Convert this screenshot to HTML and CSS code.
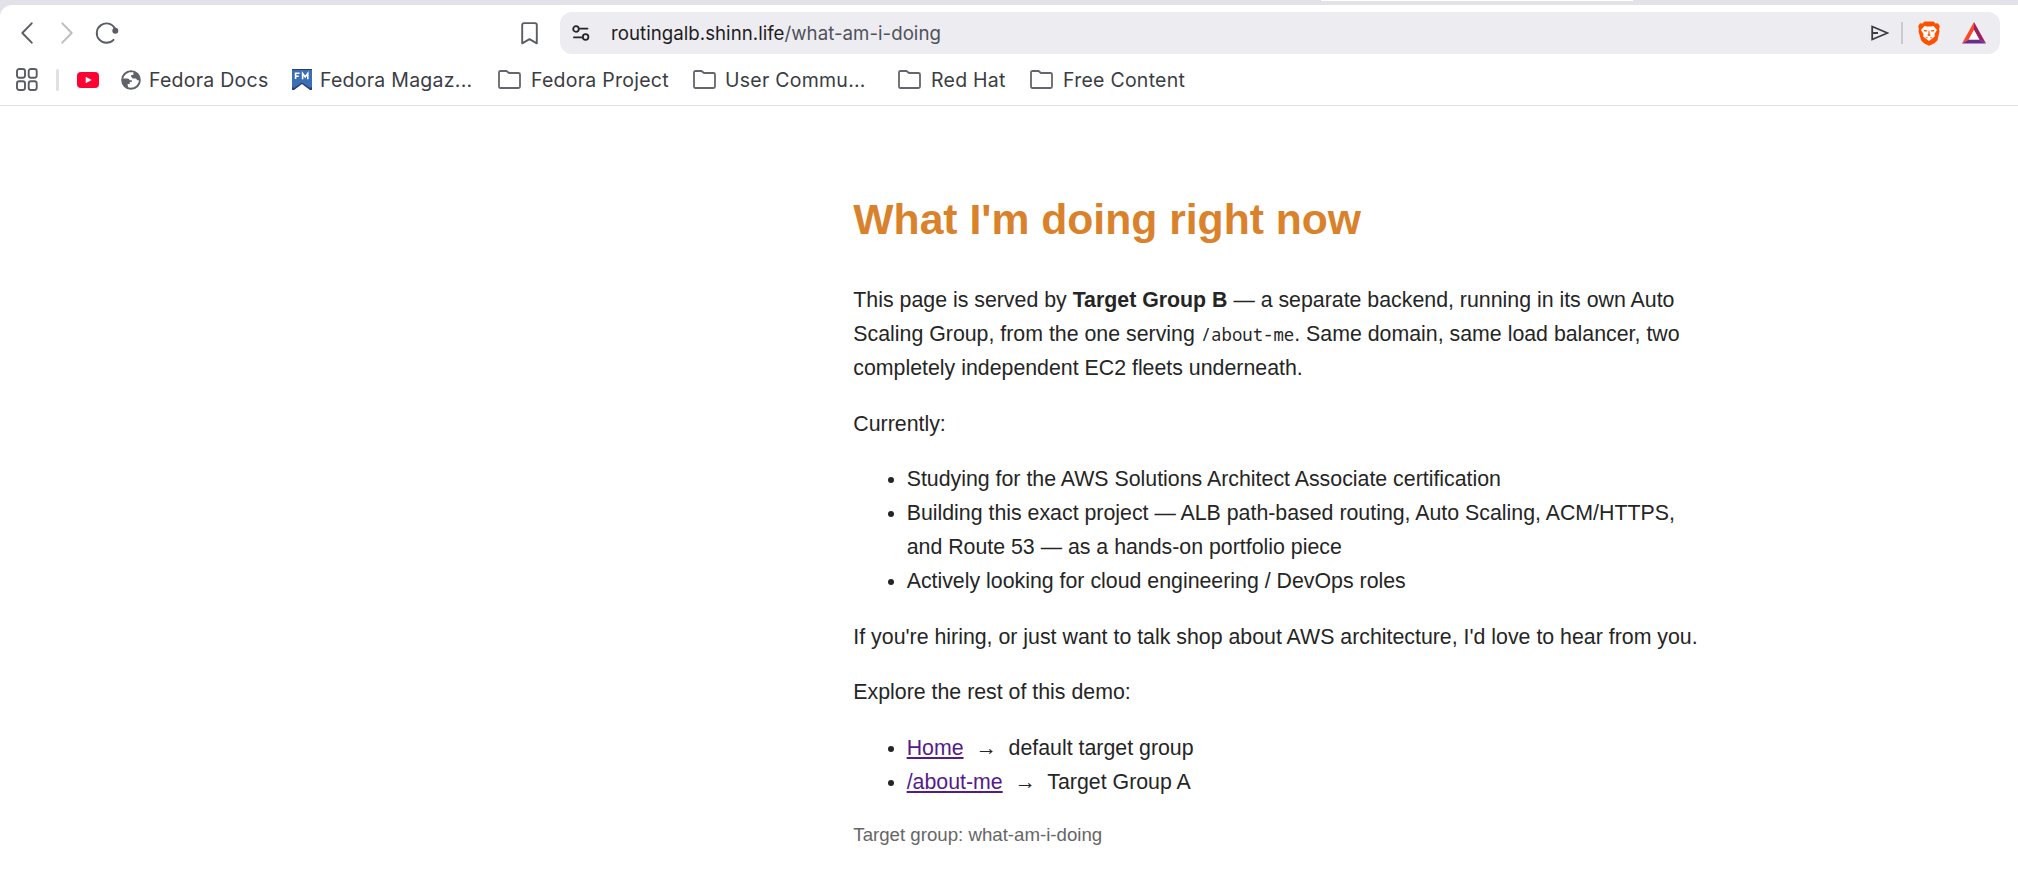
FILE: index.html
```html
<!DOCTYPE html>
<html lang="en">
<head>
<meta charset="utf-8">
<title>What I'm doing right now</title>
<link rel="stylesheet" href="styles.css">
</head>
<body>
<div class="tabstrip"><div class="active-tab"></div></div>
<header class="chrome">
  <div class="toolbar">
    <div class="nav">
      <svg width="12" height="22" viewBox="0 0 12 22"><path class="line" d="M10.700 1.300 1.300 11l9.400 9.700"/></svg>
      <svg class="faded" width="12" height="22" viewBox="0 0 12 22"><path class="line" d="M1.300 1.300 10.700 11l-9.400 9.700"/></svg>
      <svg width="24" height="24" viewBox="0 0 24 24"><path class="line" d="M20 7.500A9.700 9.700 0 1 0 18.500 18.800"/><circle class="dot" cx="20.300" cy="9.700" r="3"/></svg>
    </div>
    <svg class="save" width="17" height="23" viewBox="0 0 17 23"><path class="line" d="M1.200 3q0-1.900 1.900-1.900h10.800q1.900 0 1.900 1.900v18.300L8.500 17.200 1.200 21.300z"/></svg>
    <div class="address">
      <svg class="tune" width="18" height="16" viewBox="0 0 18 16"><circle cx="4" cy="4" r="2.800"/><path d="M8 3.600h7.500M2 12.400h7.500"/><circle cx="13.600" cy="12" r="2.800"/></svg>
      <div class="url"><span class="host">routingalb.shinn.life</span>/what-am-i-doing</div>
      <svg class="send" width="18" height="16" viewBox="0 0 18 16"><path d="M1.200 1.500 16.500 8 1.200 14.500zM1.200 8H7"/></svg>
      <i class="rule"></i>
      <svg class="brave" width="22" height="25" viewBox="0 0 22 25"><path fill="#ff5000" d="M6.500.5h9l2 2 2.500-.3 1.800 3-.8 3 .5 2-2 9-3 3L11 24.700l-5-2.500-3-3L.5 10.200l.5-2-.8-3 1.800-3 2.500.3z"/><path fill="#fff" d="m6.500 5 2.500.6h4l2.500-.6 3.500 4-2.500 3.900.3 2.500-2.500 2-3.300 2.600-3.300-2.600-2.500-2 .3-2.500L3 9z"/><path fill="#ff5000" d="m5.500 8.800 4 .7-.8 1-2.400.1zm11 0-4 .7.800 1 2.400.1zM10.600 9.500h.8l.3 3.700 1.200.8-1.900 1.200L9.100 14l1.200-.8zM7.500 16l2.500.4-1 1zm7 0-2.500.4 1 1z"/></svg>
      <svg class="bat" width="24" height="22" viewBox="0 0 24 22"><path fill="#ff4724" d="M12 0v8L6.800 17.500 0 21.500z"/><path fill="#9e1f63" d="M12 0v8l5.200 9.500 6.800 4z"/><path fill="#662d91" d="m0 21.500 6.800-4h10.400l6.800 4z"/><path fill="#fff" d="M12 8 6.800 17.500h10.400z"/></svg>
    </div>
  </div>
  <nav class="bookmarks">
    <svg class="grid" width="22" height="23" viewBox="0 0 22 23"><rect x="1" y="1" width="8" height="8.800" rx="2.200"/><rect x="12.700" y="1" width="8" height="8.800" rx="2.200"/><rect x="1" y="13.200" width="8" height="8.800" rx="2.200"/><rect x="12.700" y="13.200" width="8" height="8.800" rx="2.200"/></svg>
    <i class="divider"></i>
    <svg class="youtube" width="22" height="16" viewBox="0 0 22 16"><rect width="22" height="16" rx="4" fill="#ff0033"/><path fill="#fff" d="m8.700 4.700 6 3.300-6 3.300z"/></svg>
    <div class="mark docs"><svg width="20" height="20" viewBox="0 0 20 20"><circle cx="10" cy="10" r="9.800" fill="#5f6368"/><path fill="#fff" d="M8.500 2.200c-3 .8-5.500 3.200-6.300 6.300h4.300q1.800 0 2.200 1.800h2.100v1.800H8.700v2H6.500l.6 3.200c5 1.700 10.500-1.600 10.900-7h-1.600l-1.500-1.900h-3.200l-1.600-1.900V5h2.300V2.300z"/></svg><span>Fedora Docs</span></div>
    <div class="mark magazine"><svg width="20" height="21" viewBox="0 0 20 21"><path fill="#3c6eb4" d="M0 0h20v21h-1.500L10 14.500 1.500 21H0z"/><path fill="#294172" d="M0 0h20v1H0zM0 21v-3l2 1 8-5.500 8 5.500 2-1v3h-2l-8-6-8 6z"/><path fill="none" stroke="#fff" stroke-width="1.600" d="M3.600 10V4.300h4M3.600 7.200h3.200M10.600 10.300V4.500L13.200 8l2.600-3.500v5.800"/></svg><span>Fedora Magaz...</span></div>
    <div class="mark project"><svg width="23" height="19" viewBox="0 0 23 19"><path class="folder" d="M1 2.500Q1 1 2.500 1h6l2.500 2h9.500Q22 3 22 4.500v12q0 1.500-1.500 1.500h-18Q1 18 1 16.500z"/></svg><span>Fedora Project</span></div>
    <div class="mark community"><svg width="23" height="19" viewBox="0 0 23 19"><path class="folder" d="M1 2.500Q1 1 2.500 1h6l2.500 2h9.500Q22 3 22 4.500v12q0 1.500-1.500 1.500h-18Q1 18 1 16.500z"/></svg><span>User Commu...</span></div>
    <div class="mark redhat"><svg width="23" height="19" viewBox="0 0 23 19"><path class="folder" d="M1 2.500Q1 1 2.500 1h6l2.500 2h9.500Q22 3 22 4.500v12q0 1.500-1.500 1.500h-18Q1 18 1 16.500z"/></svg><span>Red Hat</span></div>
    <div class="mark"><svg width="23" height="19" viewBox="0 0 23 19"><path class="folder" d="M1 2.500Q1 1 2.500 1h6l2.500 2h9.500Q22 3 22 4.500v12q0 1.500-1.500 1.500h-18Q1 18 1 16.500z"/></svg><span>Free Content</span></div>
  </nav>
</header>
<main class="page">
  <h1>What I'm doing right now</h1>
  <p>This page is served by <strong>Target Group B</strong> — a separate backend, running in its own Auto Scaling Group, from the one serving <code>/about-me</code>. Same domain, same load balancer, two completely independent EC2 fleets underneath.</p>
  <p>Currently:</p>
  <ul>
    <li>Studying for the AWS Solutions Architect Associate certification</li>
    <li>Building this exact project — ALB path-based routing, Auto Scaling, ACM/HTTPS, and Route 53 — as a hands-on portfolio piece</li>
    <li>Actively looking for cloud engineering / DevOps roles</li>
  </ul>
  <p>If you're hiring, or just want to talk shop about AWS architecture, I'd love to hear from you.</p>
  <p>Explore the rest of this demo:</p>
  <ul>
    <li><a href="#home">Home</a> &nbsp;→&nbsp; default target group</li>
    <li><a href="#about-me">/about-me</a> &nbsp;→&nbsp; Target Group A</li>
  </ul>
  <p class="note">Target group: what-am-i-doing</p>
</main>
</body>
</html>
```

FILE: styles.css
```css
* { box-sizing: border-box; }
body { margin: 0; height: 873px; overflow: hidden; background: #fff; color: #252525; font-family: "Liberation Sans", Arial, sans-serif; }
svg { display: block; flex: none; }
.tabstrip { height: 5px; background: #e3e2e8; }
.active-tab { width: 312px; height: 1px; margin-left: 1321px; background: #fff; }
.chrome { height: 101px; background: linear-gradient(90deg, #e3e2e8 12px, transparent 12px) 0 0 / 100% 12px no-repeat; border-bottom: 1px solid #dfdfe3; font-family: Inter, sans-serif; }
.toolbar { display: flex; align-items: center; height: 56px; padding: 0 18px 0 21px; background: #fff; border-top-left-radius: 12px; }
.nav { display: flex; align-items: center; width: 500px; gap: 28px; }
.nav svg:last-child { margin-left: -6px; }
.line { fill: none; stroke: #5a5d64; stroke-width: 1.9; stroke-linejoin: round; stroke-linecap: round; }
.faded { opacity: .4; }
.dot { fill: #5a5d64; }
.save { margin-right: 22px; }
.address { display: flex; align-items: center; flex: 1; height: 42px; padding: 0 14px 0 12px; border-radius: 12px; background: #edecf1; }
.tune { fill: none; stroke: #24252b; stroke-width: 1.8; stroke-linecap: round; }
.url { flex: 1; margin-left: 21px; font-size: 18.667px; letter-spacing: .03px; color: #50525a; white-space: nowrap; }
.host { color: #1c1d22; }
.send { fill: none; stroke: #3b3b43; stroke-width: 1.8; }
.rule { width: 2px; height: 22px; margin: 0 15px 0 12px; background: #cacad0; }
.bat { margin-left: 22px; }
.bookmarks { display: flex; align-items: center; height: 37px; padding: 0 0 0 15.500px; font-size: 19.5px; letter-spacing: .25px; color: #3b3d43; white-space: nowrap; }
.grid { fill: none; stroke: #5a5d64; stroke-width: 1.9; }
.divider { width: 3px; height: 22px; margin: 0 18px 0 18.500px; border-radius: 2px; background: #e0e0e6; }
.youtube { margin-right: 22px; }
.mark { display: flex; align-items: center; gap: 10px; }
.docs, .magazine { gap: 8px; }
.docs { width: 171px; }
.magazine { width: 206px; }
.project { width: 195px; }
.community { width: 205px; gap: 9px; }
.redhat { width: 132px; }
.folder { fill: none; stroke: #64666d; stroke-width: 1.8; }
.page { width: 853.33px; margin: 79px 0 0 853.33px; font-size: 21.333px; line-height: 1.6; }
h1 { margin: 0 0 29.58px; font-size: 42.667px; color: #d9822b; }
p, ul { margin: 21.333px 0; }
ul { padding-left: 53.333px; }
a { color: #551a8b; }
code { font-family: "Noto Sans Mono", "Liberation Mono", monospace; font-size: 17.333px; }
.note { font-size: 18.667px; color: #666; }
```
